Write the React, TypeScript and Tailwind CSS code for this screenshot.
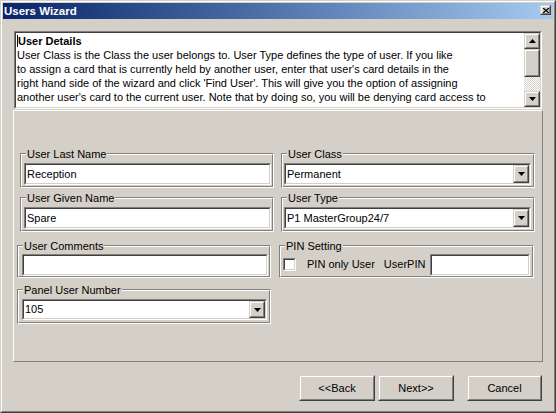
import React from "react";

function Raised({ className = "", children }: { className?: string; children?: React.ReactNode }) {
  return (
    <div className={`border border-t-[#D4D0C8] border-l-[#D4D0C8] border-r-[#404040] border-b-[#404040] ${className}`}>
      <div className="h-full w-full border border-t-white border-l-white border-r-[#808080] border-b-[#808080] bg-[#D4D0C8] flex items-center justify-center">
        {children}
      </div>
    </div>
  );
}

function Sunken({ className = "", innerClass = "", children }: { className?: string; innerClass?: string; children?: React.ReactNode }) {
  return (
    <div className={`border border-t-[#808080] border-l-[#808080] border-r-white border-b-white ${className}`}>
      <div className={`h-full w-full border border-t-[#404040] border-l-[#404040] border-r-[#D4D0C8] border-b-[#D4D0C8] bg-white ${innerClass}`}>
        {children}
      </div>
    </div>
  );
}

function Group({ label, className = "", innerClass = "", children }: { label: string; className?: string; innerClass?: string; children?: React.ReactNode }) {
  return (
    <div className={`relative shrink-0 border border-t-[#808080] border-l-[#808080] border-r-white border-b-white ${className}`}>
      <div className={`h-full w-full border border-t-white border-l-white border-r-[#808080] border-b-[#808080] ${innerClass}`}>
        {children}
      </div>
      <span className="absolute left-[5px] top-[-6px] bg-[#D4D0C8] px-[1px] leading-[12px] whitespace-nowrap">{label}</span>
    </div>
  );
}

function DownArrow() {
  return (
    <svg width="7" height="4" viewBox="0 0 7 4">
      <polygon points="0,0 7,0 3.5,4" fill="black" />
    </svg>
  );
}

function UpArrow() {
  return (
    <svg width="7" height="4" viewBox="0 0 7 4">
      <polygon points="0,4 7,4 3.5,0" fill="black" />
    </svg>
  );
}

function TextBox({ value, className = "" }: { value: string; className?: string }) {
  return (
    <Sunken className={className} innerClass="flex items-center pl-[1px]">
      <span className="leading-[13px] whitespace-nowrap">{value}</span>
    </Sunken>
  );
}

function Combo({ value, className = "" }: { value: string; className?: string }) {
  return (
    <Sunken className={className} innerClass="flex items-stretch">
      <div className="flex-1 flex items-center pl-[1px]">
        <span className="leading-[13px] whitespace-nowrap">{value}</span>
      </div>
      <Raised className="w-[16px] shrink-0">
        <DownArrow />
      </Raised>
    </Sunken>
  );
}

export default function App() {
  return (
    <div className="w-[556px] h-[413px] overflow-hidden bg-[#D4D0C8] font-['Liberation_Sans',Arial,sans-serif] text-[11px] text-black border border-t-[#D4D0C8] border-l-[#D4D0C8] border-r-[#404040] border-b-[#404040]">
      <div className="h-full border border-t-white border-l-white border-r-[#808080] border-b-[#808080] p-[1px] flex flex-col">
        {/* Title bar */}
        <div className="h-[16px] shrink-0 bg-linear-to-r from-[#0A246A] to-[#A6CAF0] flex items-start justify-between pl-[1px] pr-[2px]">
          <span className="text-white font-bold text-[11.5px] leading-[16px]">Users Wizard</span>
          <Raised className="w-[11px] h-[10px] mt-[2px]">
            <svg width="6" height="5" viewBox="0 0 6 5">
              <path d="M0 0 L6 5 M6 0 L0 5" stroke="black" strokeWidth="1.3" />
            </svg>
          </Raised>
        </div>

        {/* Description text area */}
        <Sunken className="ml-[11px] mt-[12px] w-[528px] h-[78px] shrink-0" innerClass="flex overflow-hidden">
          <div className="flex-1 overflow-hidden pl-[1px] pt-[1px] leading-[14px] whitespace-nowrap">
            <div className="flex items-center">
              <span className="inline-block w-px h-[12px] bg-black" />
              <span className="font-bold">User Details</span>
            </div>
            <div>User Class is the Class the user belongs to. User Type defines the type of user. If you like</div>
            <div>to assign a card that is currently held by another user, enter that user's card details in the</div>
            <div>right hand side of the wizard and click 'Find User'. This will give you the option of assigning</div>
            <div>another user's card to the current user. Note that by doing so, you will be denying card access to</div>
            <div>the user who currently holds the card. Click 'Find User' to search, or it will not be possible this</div>
          </div>
          <div className="w-[16px] shrink-0 flex flex-col">
            <Raised className="h-[16px] shrink-0">
              <UpArrow />
            </Raised>
            <Raised className="h-[28px] shrink-0" />
            <div className="flex-1 bg-[image:repeating-conic-gradient(#D4D0C8_0%_25%,#ffffff_0%_50%)] bg-[length:2px_2px]" />
            <Raised className="h-[16px] shrink-0">
              <DownArrow />
            </Raised>
          </div>
        </Sunken>

        {/* Details panel */}
        <div className="ml-[10px] mt-[1px] w-[530px] h-[252px] shrink-0 border border-t-white border-l-white border-r-[#808080] border-b-[#808080] pt-[42px] flex flex-col">
          <div className="flex ml-[6px] gap-[7px]">
            <Group label="User Last Name" className="w-[254px] h-[35px]" innerClass="pl-[2px] pt-[8px]">
              <TextBox value="Reception" className="w-[247px] h-[22px]" />
            </Group>
            <Group label="User Class" className="w-[254px] h-[35px]" innerClass="pl-[1px] pt-[8px]">
              <Combo value="Permanent" className="w-[247px] h-[22px]" />
            </Group>
          </div>
          <div className="flex ml-[6px] gap-[7px] mt-[9px]">
            <Group label="User Given Name" className="w-[254px] h-[35px]" innerClass="pl-[2px] pt-[8px]">
              <TextBox value="Spare" className="w-[247px] h-[22px]" />
            </Group>
            <Group label="User Type" className="w-[254px] h-[35px]" innerClass="pl-[1px] pt-[8px]">
              <Combo value="P1 MasterGroup24/7" className="w-[247px] h-[22px]" />
            </Group>
          </div>
          <div className="flex ml-[3px] gap-[8px] mt-[13px]">
            <Group label="User Comments" className="w-[254px] h-[33px]" innerClass="pl-[3px] pt-[7px]">
              <TextBox value="" className="w-[246px] h-[22px]" />
            </Group>
            <Group label="PIN Setting" className="w-[255px] h-[33px]" innerClass="pl-[2px] pt-[7px]">
              <div className="flex items-center h-[22px]">
                <Sunken className="w-[13px] h-[13px] shrink-0 -mt-[2px]" />
                <span className="ml-[11px] -mt-[2px] leading-[13px] whitespace-nowrap">PIN only User</span>
                <span className="ml-[9px] -mt-[2px] leading-[13px] whitespace-nowrap">UserPIN</span>
                <TextBox value="" className="ml-[5px] w-[100px] h-[22px]" />
              </div>
            </Group>
          </div>
          <div className="flex ml-[3px] mt-[11px]">
            <Group label="Panel User Number" className="w-[254px] h-[35px]" innerClass="pl-[3px] pt-[8px]">
              <Combo value="105" className="w-[245px] h-[21px]" />
            </Group>
          </div>
        </div>

        {/* Buttons */}
        <div className="mt-[13px] flex justify-end pr-[11px]">
          <Raised className="w-[76px] h-[26px]">
            <span className="leading-[13px]">&lt;&lt;Back</span>
          </Raised>
          <Raised className="w-[76px] h-[26px] ml-[3px]">
            <span className="leading-[13px]">Next&gt;&gt;</span>
          </Raised>
          <Raised className="w-[75px] h-[26px] ml-[13px]">
            <span className="leading-[13px]">Cancel</span>
          </Raised>
        </div>
      </div>
    </div>
  );
}
